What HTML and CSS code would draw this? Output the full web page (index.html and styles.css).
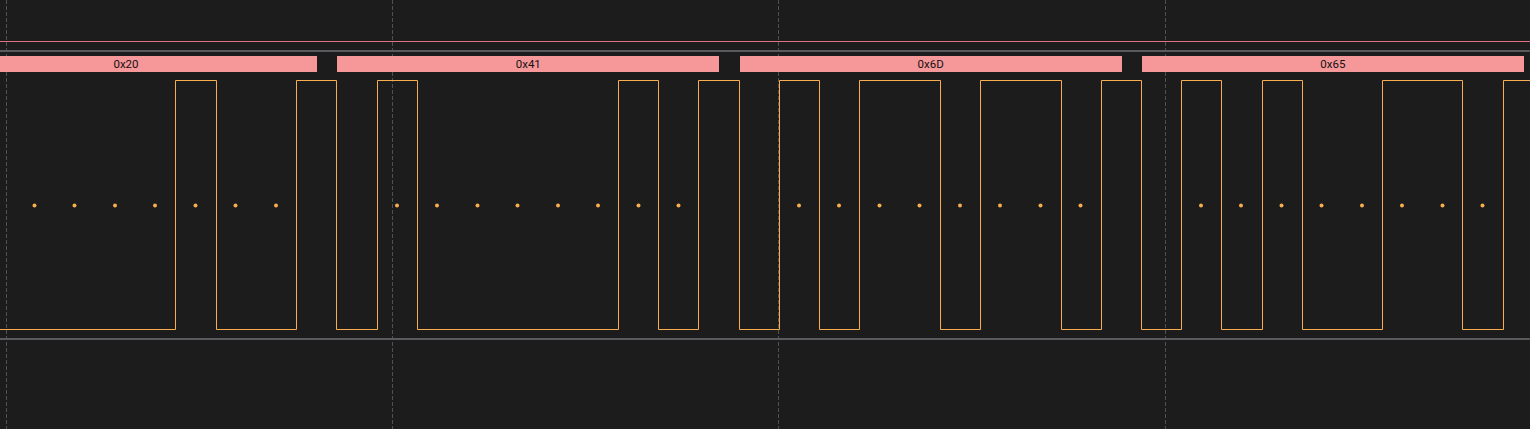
FILE: index.html
```html
<!DOCTYPE html>
<html>
<head>
<meta charset="utf-8">
<link rel="stylesheet" href="styles.css">
</head>
<body>
<div class="view">
  <svg class="grid" width="1530" height="429" viewBox="0 0 1530 429">
    <line class="gl" x1="6.5" y1="0" x2="6.5" y2="429"/>
    <line class="gl" x1="392.5" y1="0" x2="392.5" y2="429"/>
    <line class="gl" x1="778.5" y1="0" x2="778.5" y2="429"/>
    <line class="gl" x1="1165.5" y1="0" x2="1165.5" y2="429"/>
  </svg>
  <div class="track">
    <div class="marker"></div>
    <div class="rule rule-top"></div>
    <div class="bars">
      <div class="bar bar-first">0x20</div>
      <div class="bar">0x41</div>
      <div class="bar">0x6D</div>
      <div class="bar">0x65</div>
    </div>
    <svg class="wave" width="1530" height="266" viewBox="0 0 1530 266">
      <polyline class="sig" points="0,257.5 175.5,257.5 175.5,8.5 216.5,8.5 216.5,257.5 296.5,257.5 296.5,8.5 336.5,8.5 336.5,257.5 377.5,257.5 377.5,8.5 417.5,8.5 417.5,257.5 618.5,257.5 618.5,8.5 658.5,8.5 658.5,257.5 698.5,257.5 698.5,8.5 739.5,8.5 739.5,257.5 779.5,257.5 779.5,8.5 819.5,8.5 819.5,257.5 859.5,257.5 859.5,8.5 940.5,8.5 940.5,257.5 980.5,257.5 980.5,8.5 1061.5,8.5 1061.5,257.5 1101.5,257.5 1101.5,8.5 1141.5,8.5 1141.5,257.5 1181.5,257.5 1181.5,8.5 1221.5,8.5 1221.5,257.5 1262.5,257.5 1262.5,8.5 1302.5,8.5 1302.5,257.5 1382.5,257.5 1382.5,8.5 1462.5,8.5 1462.5,257.5 1503.5,257.5 1503.5,8.5 1531,8.5"/>
      <g class="dots">
        <circle cx="34.5" cy="133.5" r="2"/>
        <circle cx="74.5" cy="133.5" r="2"/>
        <circle cx="115" cy="133.5" r="2"/>
        <circle cx="155" cy="133.5" r="2"/>
        <circle cx="195.5" cy="133.5" r="2"/>
        <circle cx="235.5" cy="133.5" r="2"/>
        <circle cx="276" cy="133.5" r="2"/>
        <circle cx="397" cy="133.5" r="2"/>
        <circle cx="437" cy="133.5" r="2"/>
        <circle cx="477.5" cy="133.5" r="2"/>
        <circle cx="517.5" cy="133.5" r="2"/>
        <circle cx="558" cy="133.5" r="2"/>
        <circle cx="598" cy="133.5" r="2"/>
        <circle cx="638.5" cy="133.5" r="2"/>
        <circle cx="678.5" cy="133.5" r="2"/>
        <circle cx="799" cy="133.5" r="2"/>
        <circle cx="839" cy="133.5" r="2"/>
        <circle cx="879.5" cy="133.5" r="2"/>
        <circle cx="919.5" cy="133.5" r="2"/>
        <circle cx="960" cy="133.5" r="2"/>
        <circle cx="1000" cy="133.5" r="2"/>
        <circle cx="1040.5" cy="133.5" r="2"/>
        <circle cx="1080.5" cy="133.5" r="2"/>
        <circle cx="1201" cy="133.5" r="2"/>
        <circle cx="1241" cy="133.5" r="2"/>
        <circle cx="1281.5" cy="133.5" r="2"/>
        <circle cx="1321.5" cy="133.5" r="2"/>
        <circle cx="1362" cy="133.5" r="2"/>
        <circle cx="1402" cy="133.5" r="2"/>
        <circle cx="1442.5" cy="133.5" r="2"/>
        <circle cx="1482.5" cy="133.5" r="2"/>
      </g>
    </svg>
    <div class="rule rule-bottom"></div>
  </div>
</div>
</body>
</html>
```
FILE: styles.css
```css
html, body {
  margin: 0;
  padding: 0;
  background: #1c1c1c;
}

.view {
  position: relative;
  width: 1530px;
  height: 429px;
  overflow: hidden;
  background: #1c1c1c;
  font-family: Roboto, "Liberation Sans", sans-serif;
}

.grid {
  position: absolute;
  left: 0;
  top: 0;
  z-index: 0;
  display: block;
}

.gl {
  stroke: #505056;
  stroke-width: 1;
  stroke-dasharray: 4 2;
}

.track {
  position: relative;
  z-index: 1;
  padding-top: 41px;
  display: flex;
  flex-direction: column;
}

.marker {
  height: 1px;
  background: #e0737e;
}

.rule {
  height: 2px;
  background: #5a5a5e;
}

.rule-top {
  margin-top: 8px;
}

.bars {
  margin-top: 4px;
  height: 16px;
  display: flex;
  gap: 20.3px;
  overflow: hidden;
  width: 1530px;
}

.bar {
  flex: 0 0 382px;
  height: 16px;
  background: #f6989a;
  color: #141010;
  font-size: 11.5px;
  line-height: 16px;
  text-align: center;
}

.bar-first {
  margin-left: -65px;
}

.wave {
  display: block;
  height: 266px;
}

.sig {
  fill: none;
  stroke: #f8ad4f;
  stroke-width: 1;
}

.dots circle {
  fill: #f8ad4f;
}
```
